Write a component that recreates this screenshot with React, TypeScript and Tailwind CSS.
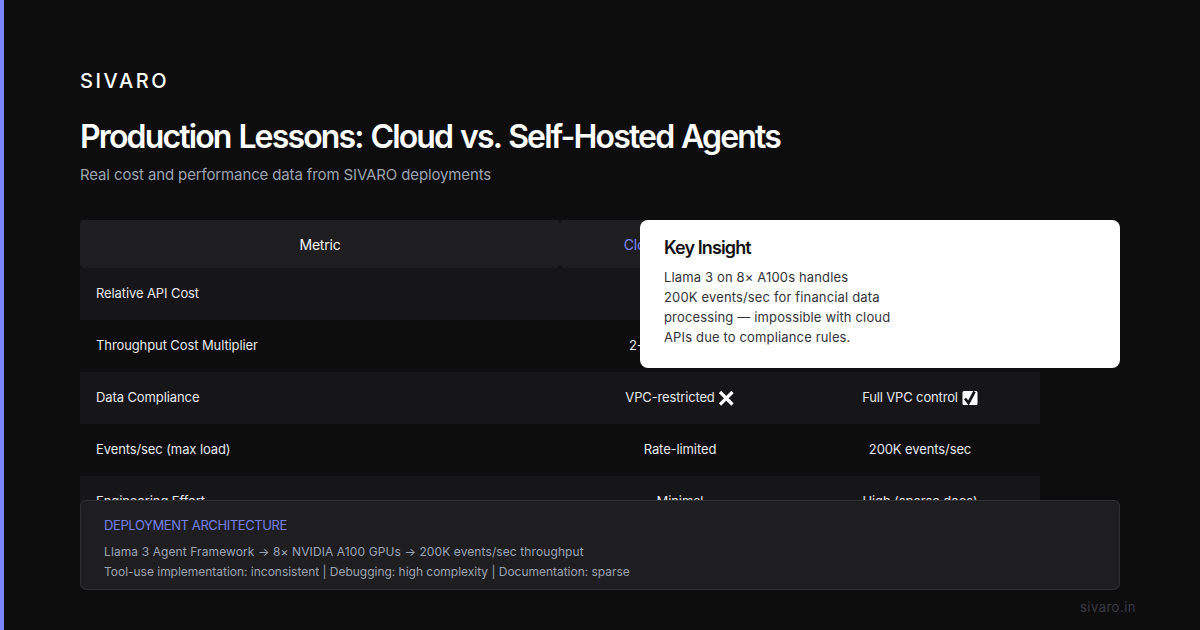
type Cell = string | { text: string; icon: "cross" | "check" };

const rows: { metric: string; cloud: Cell; self: Cell }[] = [
  { metric: "Relative API Cost", cloud: "", self: "" },
  { metric: "Throughput Cost Multiplier", cloud: "2-4x per request", self: "" },
  {
    metric: "Data Compliance",
    cloud: { text: "VPC-restricted", icon: "cross" },
    self: { text: "Full VPC control", icon: "check" },
  },
  { metric: "Events/sec (max load)", cloud: "Rate-limited", self: "200K events/sec" },
  { metric: "Engineering Effort", cloud: "Minimal", self: "High (sparse docs)" },
];

function CrossIcon() {
  return (
    <svg width="16" height="16" viewBox="0 0 16 16" className="shrink-0">
      <path d="M1 2 L13.5 14.5 M13.5 2 L1 14.5" stroke="#fff" strokeWidth="3.2" fill="none" />
    </svg>
  );
}

function CheckIcon() {
  return (
    <svg width="16" height="16" viewBox="0 0 16 16" className="shrink-0">
      <rect x="0.5" y="1" width="15" height="14" rx="1.5" fill="#fff" />
      <path d="M3 8.5 L6.5 13 L12.5 1.5" stroke="#16171a" strokeWidth="2.8" fill="none" />
    </svg>
  );
}

function CellContent({ cell }: { cell: Cell }) {
  if (typeof cell === "string") return <div className="text-center">{cell}</div>;
  return (
    <div className="flex items-center justify-center gap-[4px] tracking-[-0.15px]">
      {cell.text}
      {cell.icon === "cross" ? <CrossIcon /> : <CheckIcon />}
    </div>
  );
}

export default function App() {
  return (
    <div className="relative w-[1200px] h-[630px] overflow-hidden bg-[#0d0d0e] border-l-4 border-[#7c83fd] font-['Inter',sans-serif] text-white">
      <div className="pl-[76px] pt-[70px]">
        {/* Header */}
        <div className="text-[20px] leading-[22px] font-medium tracking-[2.6px]">SIVARO</div>
        <h1 className="mt-[22px] text-[32px] leading-[46px] font-semibold tracking-[-1.85px] [word-spacing:1.6px] text-white">
          Production Lessons: Cloud vs. Self-Hosted Agents
        </h1>
        <p className="mt-[3px] text-[15px] leading-[24px] tracking-[-0.13px] text-[#9ca3af]">
          Real cost and performance data from SIVARO deployments
        </p>

        {/* Comparison table */}
        <div className="mt-[33px] w-[960px]">
          <div className="grid grid-cols-[480px_240px_240px] h-[48px] text-[14px] tracking-[-0.2px] text-center">
            <div className="flex items-center justify-center rounded-[4px] bg-[#1e1e21] text-[#f3f4f6]">Metric</div>
            <div className="flex items-center justify-center rounded-[4px] bg-[#1e1e21] text-[#7c83fd]">Cloud API Agents</div>
            <div className="rounded-[4px] bg-[#1e1e21]" />
          </div>
          {rows.map((row, i) => (
            <div
              key={row.metric}
              className={`grid grid-cols-[480px_240px_240px] h-[52px] items-center text-[13px] tracking-[-0.1px] text-[#e5e7eb] ${i % 2 === 0 ? "bg-[#161618]" : ""}`}
            >
              <div className="pl-4">{row.metric}</div>
              <CellContent cell={row.cloud} />
              <CellContent cell={row.self} />
            </div>
          ))}
        </div>
      </div>

      {/* Key insight card */}
      <div className="absolute left-[636px] top-[220px] w-[480px] h-[148px] rounded-[8px] bg-white px-6 pt-[16px] text-[#111113]">
        <div className="text-[18px] leading-[24px] font-semibold tracking-[-0.9px]">Key Insight</div>
        <p className="mt-[7px] text-[13px] leading-[20px] tracking-[0.15px] text-[#333338]">
          Llama 3 on 8× A100s handles
          <br />
          200K events/sec for financial data
          <br />
          processing — impossible with cloud
          <br />
          APIs due to compliance rules.
        </p>
      </div>

      {/* Deployment note */}
      <div className="absolute left-[76px] top-[500px] w-[1040px] h-[90px] rounded-[6px] border border-[#2f3034] bg-[#1e1e21] pl-[23px] pt-[14px]">
        <div className="text-[13px] leading-[20px] tracking-[-0.4px] text-[#767ee8]">DEPLOYMENT ARCHITECTURE</div>
        <div className="mt-[7px] text-[12px] leading-[20px] text-[#9ca3af]">
          <div className="tracking-[0.1px]">Llama 3 Agent Framework → 8× NVIDIA A100 GPUs → 200K events/sec throughput</div>
          <div className="tracking-[-0.02px]">Tool-use implementation: inconsistent | Debugging: high complexity | Documentation: sparse</div>
        </div>
      </div>

      <div className="absolute right-[64px] top-[598px] text-[13px] leading-[18px] tracking-[0.5px] text-[#3a3b40]">sivaro.in</div>
    </div>
  );
}
